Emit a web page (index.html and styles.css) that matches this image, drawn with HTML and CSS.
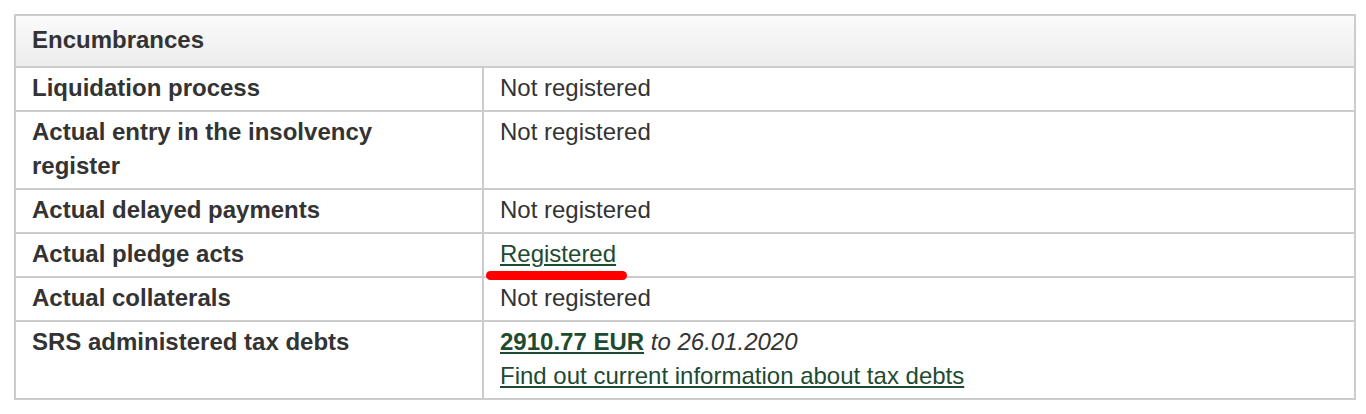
FILE: index.html
```html
<!DOCTYPE html>
<html lang="en">
<head>
<meta charset="utf-8">
<title>Encumbrances</title>
<link rel="stylesheet" href="styles.css">
</head>
<body>
<table class="info">
  <colgroup>
    <col class="col-label">
    <col class="col-value">
  </colgroup>
  <thead>
    <tr><th colspan="2" class="head">Encumbrances</th></tr>
  </thead>
  <tbody>
    <tr><th>Liquidation process</th><td>Not registered</td></tr>
    <tr><th>Actual entry in the insolvency register</th><td>Not registered</td></tr>
    <tr><th>Actual delayed payments</th><td>Not registered</td></tr>
    <tr><th>Actual pledge acts</th><td><span class="marked"><a href="#">Registered</a><span class="redline"></span></span></td></tr>
    <tr><th>Actual collaterals</th><td>Not registered</td></tr>
    <tr><th>SRS administered tax debts</th><td><a href="#" class="amount">2910.77 EUR</a> <em>to 26.01.2020</em><br><a href="#">Find out current information about tax debts</a></td></tr>
  </tbody>
</table>
</body>
</html>
```
FILE: styles.css
```css
html, body {
  margin: 0;
  padding: 0;
  background: #fff;
}
body {
  padding: 14px 10px 0 14px;
  font-family: "Liberation Sans", Arial, sans-serif;
  font-size: 24px;
  line-height: 34px;
  color: #333;
}
.info {
  width: 1342px;
  table-layout: fixed;
  border-collapse: separate;
  border-spacing: 0;
  border: 2px solid #ccc;
}
.col-label { width: 468px; }
.info th, .info td {
  text-align: left;
  vertical-align: top;
  padding: 3px 16px 5px 16px;
  border-top: 2px solid #ccc;
}
.info tbody th {
  font-weight: bold;
  border-right: 2px solid #ccc;
  padding-right: 100px;
}
.info th.head {
  border-top: 0;
  padding-top: 7px;
  padding-bottom: 9px;
  background: linear-gradient(#fbfbfb, #ececec);
  font-weight: bold;
}
a {
  color: #1d4b31;
  text-decoration: underline;
}
.amount {
  font-weight: bold;
}
em {
  font-style: italic;
}
.marked {
  position: relative;
  display: inline-block;
}
.redline {
  position: absolute;
  left: -14px;
  top: 34px;
  width: 141px;
  height: 9px;
  border-radius: 4.5px;
  background: #ff0000;
}
```
